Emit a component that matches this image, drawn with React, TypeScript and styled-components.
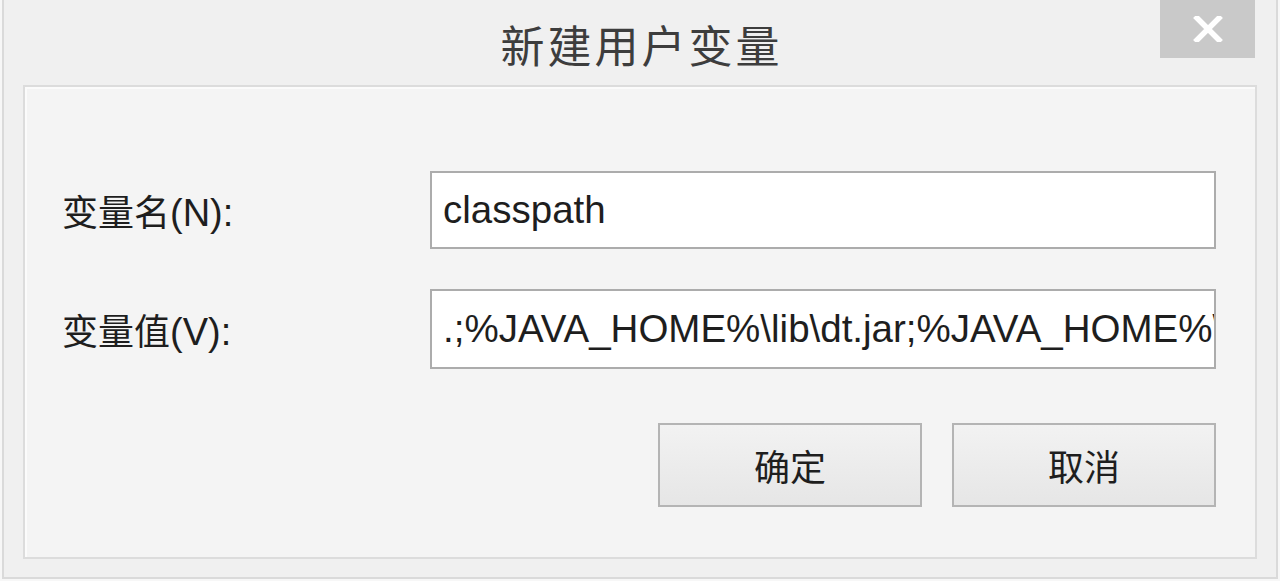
import styled, { createGlobalStyle } from 'styled-components'

const GlobalStyle = createGlobalStyle`
  html, body {
    margin: 0;
    padding: 0;
    background: #f7f7f7;
  }
  * {
    box-sizing: border-box;
  }
`

const Window = styled.div`
  width: 1276px;
  height: 579px;
  margin-left: 2px;
  display: flex;
  flex-direction: column;
  background: #f0f0f0;
  border: 2px solid #dadada;
  border-top: none;
  font-family: 'Liberation Sans', 'Noto Sans CJK SC', sans-serif;
  color: #1e1e1e;
`

const TitleBar = styled.div`
  height: 85px;
  display: grid;
  grid-template-columns: 1fr auto 1fr;
`

const Title = styled.h1`
  grid-column: 2;
  margin: 0;
  padding-top: 17px;
  padding-left: 3px;
  font-family: 'Noto Sans CJK SC', sans-serif;
  font-weight: 400;
  font-size: 44px;
  letter-spacing: 3px;
  line-height: 54px;
  color: #3d3d3d;
`

const CloseButton = styled.button`
  grid-column: 3;
  justify-self: end;
  align-self: start;
  margin-right: 21px;
  width: 95px;
  height: 58px;
  border: none;
  padding: 0;
  background: #c9c9c9;
  display: flex;
  align-items: center;
  justify-content: center;
  cursor: pointer;
`

const Panel = styled.div`
  flex: 1;
  margin: 0 19px 18px 19px;
  background: #f4f4f4;
  border: 2px solid #dcdcdc;
  box-shadow: inset 2px 2px 0 #fbfbfb;
  padding: 84px 39px 0 37px;
  display: grid;
  grid-template-columns: 368px 1fr;
  grid-auto-rows: min-content;
  row-gap: 40px;
  align-items: center;
`

const Label = styled.label`
  font-family: 'Noto Sans CJK SC', sans-serif;
  font-size: 36px;
  color: #1e1e1e;
  white-space: nowrap;
`

const Paren = styled.span`
  font-family: 'Liberation Sans', sans-serif;
  font-size: 38px;
`

const Field = styled.input<{ $h: number }>`
  width: 100%;
  height: ${(p) => p.$h}px;
  border: 2px solid #acacac;
  background: #ffffff;
  padding: 0 0 0 11px;
  font-family: 'Liberation Sans', sans-serif;
  font-size: 38.5px;
  color: #1e1e1e;
  outline: none;
`

const Actions = styled.div`
  grid-column: 1 / span 2;
  display: flex;
  justify-content: flex-end;
  gap: 30px;
  margin-top: 14px;
`

const Button = styled.button`
  width: 264px;
  height: 84px;
  border: 2px solid #b4b4b4;
  background: linear-gradient(#f2f2f2, #e6e6e6);
  font-family: 'Noto Sans CJK SC', sans-serif;
  font-size: 36px;
  color: #1e1e1e;
  cursor: pointer;
`

export default function App() {
  return (
    <>
      <GlobalStyle />
      <Window>
        <TitleBar>
          <Title>新建用户变量</Title>
          <CloseButton aria-label='关闭'>
            <svg width='30' height='26' viewBox='0 0 30 26'>
              <path
                d='M4 2 L26 24 M26 2 L4 24'
                stroke='#ffffff'
                strokeWidth='5.5'
                strokeLinecap='square'
              />
            </svg>
          </CloseButton>
        </TitleBar>

        <Panel>
          <Label>
            变量名<Paren>(N):</Paren>
          </Label>
          <Field $h={78} readOnly defaultValue='classpath' />

          <Label>
            变量值<Paren>(V):</Paren>
          </Label>
          <Field
            $h={80}
            readOnly
            defaultValue='.;%JAVA_HOME%\lib\dt.jar;%JAVA_HOME%\lib\tools.jar'
          />

          <Actions>
            <Button>确定</Button>
            <Button>取消</Button>
          </Actions>
        </Panel>
      </Window>
    </>
  )
}
